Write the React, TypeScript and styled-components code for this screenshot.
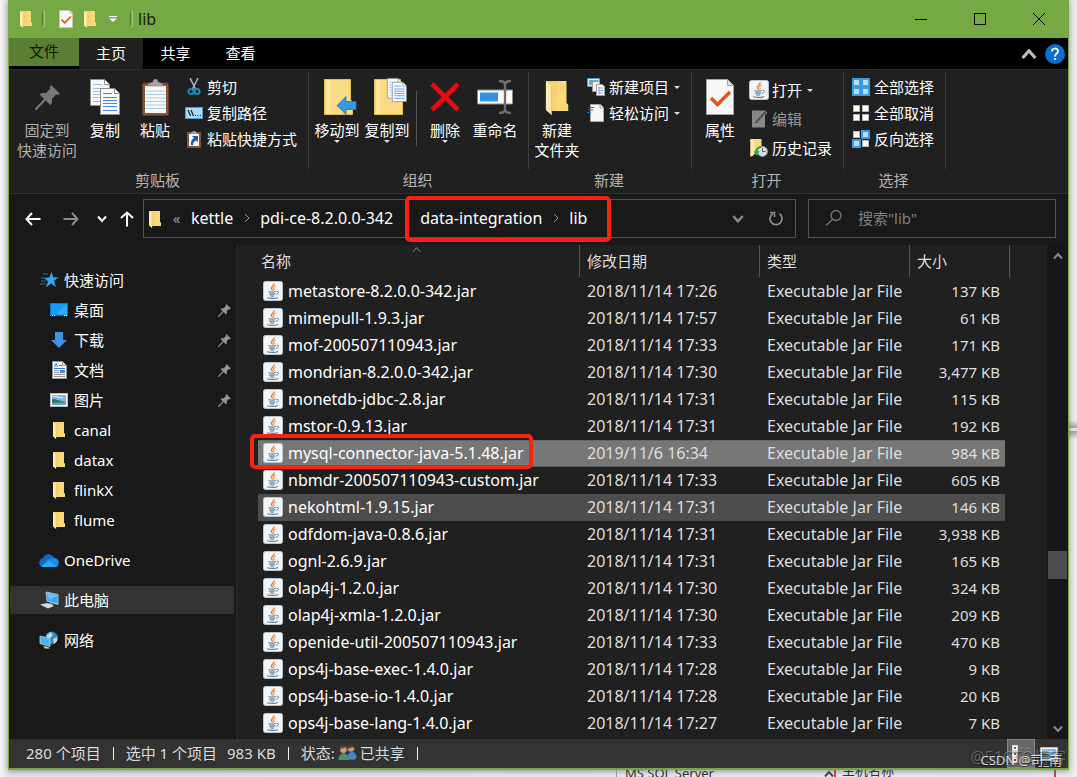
import React from "react";
import styled, { createGlobalStyle } from "styled-components";

const GlobalStyle = createGlobalStyle`
  * { box-sizing: border-box; }
  html, body { margin: 0; background: #efefef; }
  body {
    font-family: "Noto Sans", "Noto Sans CJK SC", sans-serif;
    font-size: 15px;
    line-height: 20px;
    color: #fff;
    overflow: hidden;
  }
  button, input { font: inherit; color: inherit; background: none; border: 0; margin: 0; padding: 0; }
  a { color: inherit; text-decoration: none; }
  svg { display: block; flex: none; }
  button { white-space: nowrap; }
`;

/* ---------- icons ---------- */

const Folder = ({ w = 14, h = 18 }: { w?: number; h?: number }) => (
  <svg width={w} height={h} viewBox="0 0 14 18" preserveAspectRatio="none">
    <path d="M1 1h11v11l1 1v3H3z" fill="#f6d274" />
    <path d="M8 1h4v11l1 1v3H6z" fill="#fbd977" />
    <path d="M1 1l3 2.500v14.500L1 15.500z" fill="#ffeab0" />
    <path d="M4 3.500V18" stroke="#e5bd5c" strokeWidth=".4" />
  </svg>
);

const Checked = ({ w, h }: { w: number; h: number }) => (
  <svg width={w} height={h} viewBox="0 0 28 36">
    <path d="M.5.5h21l6 6v29H.5z" fill="#f8f8f8" stroke="#a5a5a5" />
    <path d="M21.500.5v6h6" fill="#ddd" stroke="#a5a5a5" />
    <path d="M5 19l6.500 6.500L24 13" fill="none" stroke="#e8530e" strokeWidth="3.400" />
  </svg>
);

const Pin = ({ size, color }: { size: number; color: string }) => (
  <svg width={size} height={size} viewBox="0 0 24 24">
    <path d="M15.500 0L24 8.500l-2.200 1.200-1.500-.5-4.200 4.200c.7 2.300.4 4.200-1.200 6l-4.600-4.500L1.500 24 0 24l.2-1.700 8.500-8.900-4.300-4.300c1.800-1.500 3.800-1.800 6-1.100l4.200-4.300-.5-1.500z" fill={color} />
  </svg>
);

const Sheet = ({ x, y, line = "#4a86e8" }: { x: number; y: number; line?: string }) => (
  <g transform={`translate(${x} ${y})`}>
    <path d="M.5.5h14l5 5v21H.5z" fill="#f7f9fc" stroke="#8e8e8e" />
    <path d="M14.500.5v5h5" fill="#fff" stroke="#8e8e8e" />
    <path d="M3 5.500h9M3 9.500h14M3 12.500h14M3 15.500h14M3 18.500h14M3 22.500h14" stroke={line} />
  </g>
);

const CopyIcon = () => (
  <svg width="30" height="36" viewBox="0 0 30 36">
    <Sheet x={0} y={0} line="#9dbdf0" />
    <Sheet x={10} y={9} />
  </svg>
);

const PasteIcon = () => (
  <svg width="27" height="37" viewBox="0 0 27 37">
    <rect x=".5" y="4" width="26" height="32.500" rx="1.500" fill="#86583a" stroke="#5e3b22" />
    <path d="M3 7h21v27H3z" fill="#f6f9fb" />
    <path d="M3 12h21M3 15.500h21M3 19h21M3 22.500h21M3 26h21M3 29.500h21" stroke="#a9cfe4" />
    <path d="M6 7V5l5-2c0-4 5-4 5 0l5 2v2z" fill="#a4a4a4" stroke="#777" strokeWidth=".6" />
  </svg>
);

const ScissorsIcon = () => (
  <svg width="14" height="18" viewBox="0 0 14 18">
    <path d="M3 0l5.500 11M11 0L5.500 11" stroke="#a9b3bb" strokeWidth="1.500" />
    <circle cx="4" cy="13.500" r="2.600" fill="none" stroke="#168ed0" strokeWidth="1.900" />
    <circle cx="10" cy="13.500" r="2.600" fill="none" stroke="#168ed0" strokeWidth="1.900" />
  </svg>
);

const PathIcon = () => (
  <svg width="18" height="12" viewBox="0 0 18 12">
    <path d="M.5.5h17v11H.5z" fill="#a8dcf9" stroke="#4f9fd2" />
    <path d="M3 3l2.500 6M6 3l2.500 6" stroke="#222" strokeWidth="1.200" />
    <path d="M10 8.500h1M12.500 8.500h1M15 8.500h1" stroke="#222" />
  </svg>
);

const PasteLinkIcon = () => (
  <svg width="14" height="18" viewBox="0 0 14 18">
    <rect y="2" width="14" height="16" rx="1" fill="#80563a" />
    <path d="M2 4h10v12H2z" fill="#f4f7fa" />
    <path d="M3 4l3-3h2l3 3z" fill="#9a9a9a" />
    <path d="M5 6h6v6L9 10.500C7 11.500 6 13 6 15H4c-.5-3 .5-5.500 3-7z" fill="#215d9e" />
  </svg>
);

const BigFolder = ({ children }: { children?: React.ReactNode }) => (
  <svg width="40" height="40" viewBox="-6 1 40 40">
    <path d="M1.500 3.500h26v20l2 3v12h-28z" fill="#fbdc86" stroke="#e8bd53" />
    <path d="M4 4v34M6 4v34" stroke="#ffedb7" />
    {children}
  </svg>
);

const MoveToIcon = () => (
  <BigFolder>
    <path d="M14 29.500l9-9v5h10v8H23v5z" fill="#3a97e6" stroke="#2278c4" strokeWidth=".8" />
  </BigFolder>
);

const CopyToIcon = () => (
  <BigFolder>
    <g transform="translate(14 2) scale(.76)">
      <Sheet x={0} y={0} line="#9dbdf0" />
    </g>
    <g transform="translate(19 6) scale(.74)">
      <Sheet x={0} y={0} />
    </g>
  </BigFolder>
);

const DeleteIcon = () => (
  <svg width="30" height="30" viewBox="0 0 30 30">
    <path d="M2 2l26 26M28 2L2 28" stroke="#e60b12" strokeWidth="4.600" />
  </svg>
);

const RenameIcon = () => (
  <svg width="36" height="34" viewBox="0 0 36 34">
    <path d="M.5 10h35v14H.5z" fill="#fff" stroke="#8a8a8a" />
    <path d="M3 12.500h18v9H3z" fill="#3493e4" />
    <path d="M28 3v28M28 5c0-3-2-4-6-4M28 5c0-3 2-4 6-4M28 29c0 3-2 4-6 4M28 29c0 3 2 4 6 4" fill="none" stroke="#6f6f6f" strokeWidth="2.400" />
  </svg>
);

const NewItemIcon = () => (
  <svg width="18" height="18" viewBox="0 0 18 18">
    <path d="M.5.5h12v8H.5z" fill="#d9eef8" stroke="#4f9cc0" />
    <path d="M2 2h9v5H2z" fill="#70a8b8" />
    <path d="M5.500 3.500h7v10h-7z" fill="#eee" stroke="#999" />
    <path d="M9.500 6.500h6l2 2v9h-8z" fill="#fff" stroke="#999" />
    <path d="M11 10h5M11 12.500h5M11 15h5" stroke="#7d9fd0" />
    <path d="M12 8v9" stroke="#e08080" strokeWidth=".7" />
  </svg>
);

const EasyAccessIcon = () => (
  <svg width="18" height="18" viewBox="0 0 18 18">
    <path d="M3.500.5h10l3 3v14h-13z" fill="#f7f7f7" stroke="#aaa" />
    <path d="M13 .5v3.500h3.500" fill="none" stroke="#999" />
    <path d="M2 3.500h5M1 6h5M0 8.500h4" stroke="#1e6fb8" strokeWidth="1.200" />
  </svg>
);

const JavaIcon = () => (
  <svg width="20" height="20" viewBox="0 0 20 20">
    <rect x=".5" y=".5" width="19" height="19" rx="2" fill="#f2f4f5" stroke="#b6c6d2" />
    <path d="M11 2.500c1 2-3.500 3.300-2.600 5.100.3.700 1.100 1.100 1.200 1.900" fill="none" stroke="#e87b2c" strokeWidth="1.400" />
    <path d="M12.700 5.200c-2 .9-2.700 1.700-1.700 2.700.5.600.2 1.100-.5 1.700" fill="none" stroke="#e87b2c" />
    <path d="M5.500 10.500c2 .7 5.500.7 7.300 0M6 12.700c2 .6 4.500.6 6 0M7 14.700c1.500.5 3 .5 4.300 0M4 16.700c3 1 8.500 1 11-.2" fill="none" stroke="#5d7f9b" strokeWidth="1.200" />
    <path d="M13.500 10.300c2.600-.6 3 2.200-.6 3" fill="none" stroke="#5d7f9b" />
  </svg>
);

const EditIcon = () => (
  <svg width="18" height="18" viewBox="0 0 18 18">
    <path d="M2 .5h13v17H2z" fill="#888" />
    <path d="M4 15l1-4L14.500.8l2.500 2L7 13.500z" fill="#555" stroke="#aaa" strokeWidth=".6" />
  </svg>
);

const HistoryIcon = () => (
  <svg width="18" height="18" viewBox="0 0 18 18">
    <path d="M.5 0h11v15H3L.5 17z" fill="#f9d97f" />
    <path d="M.5 0L4 2v14l-3.500 2z" fill="#ffebb5" />
    <circle cx="12.500" cy="12.500" r="5" fill="#d7dcdf" stroke="#999" strokeWidth=".8" />
    <path d="M12.500 9.500v3h3" fill="none" stroke="#555" />
    <path d="M11.500 8c-4 0-6 3-5 6" fill="none" stroke="#35a839" strokeWidth="2.200" />
    <path d="M3.500 12.500l3.500 4.500 2.500-5z" fill="#35a839" />
  </svg>
);

const SelectGrid = ({ on }: { on: number[] }) => (
  <svg width="18" height="18" viewBox="0 0 18 18">
    {[0, 1, 2, 3].map((i) => {
      const x = (i % 2) * 9;
      const y = i > 1 ? 9 : 0;
      return on.includes(i) ? (
        <rect key={i} x={x + 1} y={y + 1} width="7" height="7" fill="#b9e0fc" stroke="#3b9ae8" strokeWidth="2" />
      ) : (
        <rect key={i} x={x + 1.5} y={y + 1.5} width="6" height="6" fill="#fff" stroke="#b5b5b5" />
      );
    })}
  </svg>
);

const Chevron = ({ dir, w = 10, color = "#999", weight = 2 }: { dir: "up" | "down" | "right"; w?: number; color?: string; weight?: number }) => (
  <svg width={w} height={w} viewBox="0 0 10 10">
    <path
      d={dir === "up" ? "M1 7.500l4-4.500 4 4.500" : dir === "down" ? "M1 2.500l4 4.500 4-4.500" : "M3 1l4 4-4 4"}
      fill="none" stroke={color} strokeWidth={weight}
    />
  </svg>
);

const Arrow = ({ turn = 0, color = "#fff" }: { turn?: number; color?: string }) => (
  <svg width="16" height="16" viewBox="0 0 16 16">
    <path d="M15.500 8H1.500M7 2L1.500 8 7 14" transform={`rotate(${turn} 8 8)`} fill="none" stroke={color} strokeWidth="2" />
  </svg>
);

const Triangle = () => (
  <svg width="6" height="3" viewBox="0 0 6 3"><path d="M0 0h6L3 3z" fill="#ddd" /></svg>
);

const StarIcon = () => (
  <svg width="19" height="16" viewBox="0 0 19 16">
    <path d="M11.500 0l1.600 5.300 5.400.3-4.500 3.200 2 6.200-4.800-3.500L6 15.500l2-6-3.700-3.500 5-.4z" fill="#35a7f2" />
    <path d="M3 2h5M1 6h4M1 9h5M0 12h6" stroke="#1c78bd" strokeWidth="1.200" />
  </svg>
);
const DesktopIcon = () => (
  <svg width="18" height="14" viewBox="0 0 18 14">
    <path d="M.5.5h17v12H.5z" fill="#159cf8" stroke="#0b78cd" />
    <path d="M17 1v10H7z" fill="#35acfb" />
    <path d="M1 12.500h16" stroke="#0a67b0" /><path d="M2 12.500h1M4 12.500h1M14 12.500h1M16 12.500h1" stroke="#fff" />
  </svg>
);
const DownloadIcon = () => (
  <svg width="16" height="16" viewBox="0 0 16 16"><path d="M4 0h8v8h4l-8 8-8-8h4z" fill="#3d94df" /></svg>
);
const DocumentIcon = () => (
  <svg width="15" height="18" viewBox="0 0 15 18">
    <path d="M.5.5h10l4 4v13H.5z" fill="#f8f8f8" stroke="#999" />
    <path d="M10.500.5v4h4" fill="none" stroke="#999" />
    <path d="M2.500 6L4 2.500 5.500 6M7 4.500h3M2 7.500h11M8 9.500h5" stroke="#2787ca" fill="none" />
    <path d="M2 9.500h5M2 11.500h5M2 13.500h11M2 15.500h11" stroke="#999" /><path d="M8 9h5v3H8z" fill="#4c8fb8" />
  </svg>
);
const PictureIcon = () => (
  <svg width="18" height="14" viewBox="0 0 18 14">
    <path d="M.5.5h17v13H.5z" fill="#fff" stroke="#bbb" />
    <path d="M2 2h14v10H2z" fill="#7db7ea" />
    <path d="M2 6c4 0 8 2 14 3v1H2z" fill="#3f6f5c" /><path d="M2 10l14-1v3H2z" fill="#5fa5c8" />
    <path d="M3 3.500h5M7 4.500h6" stroke="#d6ebfa" />
  </svg>
);
const CloudIcon = () => (
  <svg width="20" height="13" viewBox="0 0 20 13">
    <path d="M4 4c2-5 9-5 11 0 6 0 6 9 1 9H4C-1 13-1 5 4 4z" fill="#0f6cc4" />
    <path d="M15 4c6 0 6 9 1 9H9L7 6c3-1 6-2 8-2z" fill="#1490df" />
    <path d="M2 12l8-5 8 5-2 1H4z" fill="#2ba9ef" />
  </svg>
);
const ComputerIcon = () => (
  <svg width="20" height="18" viewBox="0 0 20 18">
    <path d="M7 1l12 2.500v10L8 10z" fill="#3aa8f4" stroke="#bfd5e2" strokeWidth=".8" />
    <path d="M8 1.500l10.500 3L10 9z" fill="#66c1fa" />
    <path d="M10 12l5 1-2 1.500-4-.8z" fill="#9aa5ac" />
    <path d="M1 13.500l7-1.500 7 3-6 2.500z" fill="#d7dcdf" />
  </svg>
);
const NetworkIcon = () => (
  <svg width="20" height="18" viewBox="0 0 20 18">
    <circle cx="12.500" cy="7" r="6.500" fill="#3d86b2" />
    <path d="M8 4l4-3 2 3-3 3-3 0zM14 8l4-2v4l-3 3z" fill="#b7dcea" />
    <path d="M1 5l10 2.500v8L1 12.500z" fill="#46b2fa" stroke="#b5ceda" strokeWidth=".8" />
    <path d="M4 15l5 1 2 1.500-5 0z" fill="#ccd4d8" />
  </svg>
);
const PeopleIcon = () => (
  <svg width="19" height="17" viewBox="0 0 19 17">
    <path d="M9 15c0-9 9.500-9 9.500-1L16 16z" fill="#4088c9" />
    <circle cx="13" cy="4.500" r="3.300" fill="#c99873" /><path d="M9.500 5c0-6 7-6 7 0l-2-2z" fill="#4d3a2c" />
    <path d="M.5 16c0-9 10-9 10.500 0z" fill="#46936b" />
    <circle cx="5.500" cy="5.500" r="3.400" fill="#d0a17c" /><path d="M2 5.500c0-5 7-5 7 0l-2-2z" fill="#5e4532" />
  </svg>
);
const SearchIcon = () => (
  <svg width="18" height="18" viewBox="0 0 18 18">
    <circle cx="11" cy="6.500" r="5" fill="none" stroke="#777" strokeWidth="1.300" />
    <path d="M7.500 10.500L1 16.500" stroke="#777" strokeWidth="1.300" />
  </svg>
);
const RefreshIcon = () => (
  <svg width="14" height="16" viewBox="0 0 14 16">
    <path d="M4 2.500a6 6 0 1 0 6.500.3" fill="none" stroke="#8a8a8a" strokeWidth="1.800" />
    <path d="M1 1.500h4.500V6" fill="none" stroke="#8a8a8a" strokeWidth="1.600" />
  </svg>
);
const HelpIcon = () => (
  <svg width="20" height="20" viewBox="0 0 20 20">
    <circle cx="10" cy="10" r="10" fill="#0c6fd0" />
    <path d="M7 7.500C7 3.500 13 3.500 13 7.300c0 2.400-3 2.400-3 5.200M10 14v2" fill="none" stroke="#fff" strokeWidth="1.700" />
  </svg>
);
const DetailsIcon = () => (
  <svg width="18" height="18" viewBox="0 0 18 18">
    <path d="M0 0h6v18H0z" fill="#ddd" />
    <path d="M1 1h4v4H1zM1 7h4v4H1zM1 13h4v4H1z" fill="#fff" />
    <path d="M2 2h2v2H2z" fill="#2e75b8" /><path d="M2 8h2v2H2z" fill="#5b7a2c" /><path d="M2 14h2v2H2z" fill="#c02020" />
    <path d="M7 3h4M13 3h5" stroke="#888" />
  </svg>
);

/* ---------- window frame ---------- */

const Desktop = styled.div`
  display: grid;
  grid-template-columns: 8px minmax(0, 1fr) 8px;
  background: linear-gradient(90deg, #f4f4f4, #e4e4e4 8px, #ececec);
`;

const Backdrop = styled.div`
  grid-column: 3;
  grid-row: 1;
  background: linear-gradient(#ebebeb 0 420px, #aaa 427px 428px, #e4e4e4 428px 431px, #aaa 431px 432px, #eee 440px);
`;

const Window = styled.main`
  grid-column: 2;
  grid-row: 1;
  border: 1px solid #76a843;
  border-top: 0;
  border-bottom-width: 2px;
  background: #191919;
  box-shadow: 0 1px 6px rgba(0, 0, 0, 0.4);
`;

const BelowWindow = styled.div`
  grid-column: 2;
  grid-row: 2;
  height: 7px;
  overflow: hidden;
  display: flex;
  align-items: center;
  padding-left: 600px;
  color: #333;
  font-size: 13px;
  line-height: 7px;
`;

const ShadedBox = styled.span`
  border-left: 1px solid #999;
  padding-left: 8px;
  margin-left: 8px;
  width: 208px;
  white-space: nowrap;
`;

const RedBox = styled.span`
  width: 222px;
  height: 7px;
  border: 0 solid #c64050;
  border-width: 0 2px;
  padding-left: 6px;
  line-height: 0;
`;

const TitleBar = styled.header`
  display: flex;
  align-items: center;
  height: 38px;
  padding-left: 10px;
  background: #76a843;
  color: #101c04;
`;

const QuickTools = styled.div`
  display: flex;
  align-items: center;
  width: 119px;
`;

const QuickButton = styled.button<{ $w: number }>`
  display: flex;
  justify-content: center;
  width: ${(p) => p.$w}px;
`;

const ToolDivider = styled.span<{ $gap: number }>`
  width: 3px;
  height: 16px;
  margin: 0 ${(p) => p.$gap}px;
  border: 1px solid #a4c57f;
  border-left-color: #557d2c;
  border-radius: 1px;
`;

const WindowTitle = styled.h1`
  flex: 1;
  margin: 0;
  font-size: 16px;
  font-weight: 400;
`;

const CaptionButton = styled.button`
  display: flex;
  align-items: center;
  justify-content: center;
  width: 59px;
  height: 38px;
`;

const TabBar = styled.nav`
  display: flex;
  height: 31px;
  background: #000;
`;

const Tab = styled.button<{ $kind?: "file" | "active" }>`
  width: ${(p) => (p.$kind === "file" ? 70 : p.$kind ? 64 : 65)}px;
  height: ${(p) => (p.$kind === "file" ? 28 : 31)}px;
  padding-bottom: 2px;
  background: ${(p) => (p.$kind === "file" ? "#5a7f32" : p.$kind ? "#202020" : "none")};
  color: ${(p) => (p.$kind === "file" ? "#0c1404" : "#fff")};
`;

const TabTools = styled.div`
  display: flex;
  align-items: center;
  gap: 8px;
  margin-left: auto;
  padding-right: 3px;
`;

/* ---------- ribbon ---------- */

const Ribbon = styled.section`
  display: flex;
  height: 125px;
  border-top: 1px solid #2d2d2d;
  border-bottom: 1px solid #303030;
  background: #202020;
`;

const Group = styled.section<{ $w: number }>`
  flex: none;
  width: ${(p) => p.$w}px;
  display: flex;
  flex-direction: column;
  background: linear-gradient(#404040, #404040) right 0 top 2px / 1px 97px no-repeat;
`;

const GroupBody = styled.div<{ $pad?: number }>`
  display: flex;
  height: 100px;
  padding-left: ${(p) => p.$pad ?? 3}px;
`;

const GroupTitle = styled.h2`
  margin: 0;
  padding-right: 3px;
  font-size: 15px;
  font-weight: 400;
  line-height: 20px;
  color: #b4b4b4;
  text-align: center;
`;

const BigButton = styled.button<{ $w?: number; $dim?: boolean }>`
  display: flex;
  flex-direction: column;
  align-items: center;
  width: ${(p) => p.$w ?? 50}px;
  padding-top: 4px;
  color: ${(p) => (p.$dim ? "#b0b0b0" : "#fff")};
`;

const BigIcon = styled.span`
  display: flex;
  align-items: center;
  justify-content: center;
  height: 46px;
`;

const SmallColumn = styled.div<{ $gap?: number }>`
  display: flex;
  flex-direction: column;
  align-items: flex-start;
  gap: ${(p) => p.$gap ?? 6}px;
  padding: ${(p) => (p.$gap ? 10 : 7)}px 0 0 4px;
`;

const SmallButton = styled.button<{ $dim?: boolean }>`
  display: flex;
  align-items: center;
  gap: 3px;
  height: 20px;
  color: ${(p) => (p.$dim ? "#999" : "#fff")};
`;

const SmallIcon = styled.span<{ $w?: number }>`
  display: flex;
  justify-content: center;
  width: ${(p) => p.$w ?? 20}px;
`;

const BodyDivider = styled.span`
  width: 1px;
  height: 55px;
  margin: 21px 3px 0 4px;
  background: #555;
`;

/* ---------- address ---------- */

const AddressRow = styled.div`
  display: flex;
  align-items: center;
  height: 51px;
  padding: 0 12px 2px 16px;
`;

const HistoryButtons = styled.div`
  display: flex;
  align-items: center;
  gap: 22px;
  width: 118px;
`;

const PairedButtons = styled.div`
  display: flex;
  align-items: center;
  gap: 12px;
  margin-left: -4px;
`;

const AddressBox = styled.div`
  flex: 1;
  display: flex;
  align-items: center;
  height: 39px;
  border: 1px solid #535353;
  padding-left: 4px;
`;

const Crumb = styled.a`
  padding-bottom: 2px;
  font-size: 16px;
  white-space: nowrap;
`;

const CrumbGap = styled.span<{ $w?: number }>`
  display: flex;
  justify-content: center;
  width: ${(p) => p.$w ?? 27}px;
  padding-bottom: 2px;
  color: #999;
`;

const AddressSpace = styled.span`
  flex: 1;
`;

const MarkedCrumbs = styled.span`
  position: relative;
  display: flex;
  align-items: center;
`;

const Mark = styled.span<{ $kind: "path" | "row" }>`
  position: absolute;
  inset: ${(p) => (p.$kind === "path" ? "-12px -24px -12px -15px" : "-6px 46px -2px -8px")};
  border: 4px solid #fb2113;
  border-radius: 5px;
  pointer-events: none;
  z-index: 1;
`;

const AddressButton = styled.button`
  display: flex;
  align-items: center;
  justify-content: center;
  width: 38px;
  height: 37px;
`;

const SearchBox = styled.label`
  display: flex;
  align-items: center;
  gap: 15px;
  width: 248px;
  height: 39px;
  margin-left: 12px;
  padding: 0 0 2px 16px;
  border: 1px solid #535353;
`;

const SearchInput = styled.input`
  width: 180px;
  outline: 0;
  &::placeholder { color: #808080; opacity: 1; }
`;

/* ---------- body ---------- */

const Body = styled.div`
  display: flex;
`;

const Sidebar = styled.nav`
  flex: none;
  width: 229px;
  padding-top: 21px;
  border-right: 2px solid #272727;
`;

const NavSection = styled.div`
  padding-bottom: 10px;
`;

const NavLink = styled.a<{ $child?: boolean; $active?: boolean }>`
  display: flex;
  align-items: center;
  gap: 4px;
  height: 28px;
  margin: 0 2px 2px 1px;
  padding-left: ${(p) => (p.$child ? 38 : 28)}px;
  padding-right: 3px;
  background: ${(p) => (p.$active ? "#333" : "none")};
`;

const NavIcon = styled.span`
  display: flex;
  justify-content: center;
  width: 22px;
`;

const NavLabel = styled.span`
  flex: 1;
`;

const ListPane = styled.section`
  flex: 1;
  min-width: 0;
  overflow: hidden;
  padding: 0 0 2px 20px;
  background: #202020;
`;

const FileTable = styled.table`
  width: 752px;
  table-layout: fixed;
  border-collapse: separate;
  border-spacing: 0;
`;

const HeadCell = styled.th<{ $first?: boolean }>`
  position: relative;
  height: 33px;
  padding: 0 0 2px ${(p) => (p.$first ? 3 : 8)}px;
  text-align: left;
  font-weight: 400;
  color: #dedede;
  background: ${(p) => (p.$first ? "none" : "linear-gradient(#555, #555) left top / 1px 32px no-repeat")};
  &:last-child { border-right: 1px solid #555; }
`;

const SortMark = styled.span`
  position: absolute;
  left: 154px;
  top: 0;
`;

const FileRow = styled.tr<{ $state?: "selected" | "hover" }>`
  height: 27px;
  & > td:not(:last-child) {
    background: ${(p) => (p.$state === "selected" ? "#777" : p.$state ? "#4d4d4d" : "none")};
    box-shadow: ${(p) => (p.$state === "selected" ? "inset 0 1px #666, inset 0 -1px #5c5c5c" : "none")};
  }
`;

const Cell = styled.td<{ $right?: boolean }>`
  padding: ${(p) => (p.$right ? "0 5px 2px 0" : "0 0 2px 8px")};
  text-align: ${(p) => (p.$right ? "right" : "left")};
  font-size: ${(p) => (p.$right ? 15 : 16)}px;
  color: #dedede;
  white-space: nowrap;
`;

const NameCell = styled.td`
  position: relative;
  padding: 0 0 2px 5px;
  font-size: 16px;
  color: #fff;
  white-space: nowrap;
`;

const FileName = styled.span`
  display: flex;
  align-items: center;
  gap: 5px;
`;

const ScrollBar = styled.div`
  display: flex;
  flex-direction: column;
  width: 21px;
  background: #171717;
`;

const ScrollButton = styled.button`
  display: flex;
  justify-content: center;
  align-items: center;
  height: 21px;
`;

const ScrollTrack = styled.div`
  flex: 1;
  padding: 285px 1px 0 1px;
`;

const ScrollThumb = styled.div`
  height: 28px;
  background: #4d4d4d;
`;

const StatusBar = styled.footer`
  position: relative;
  display: flex;
  align-items: center;
  height: 29px;
  padding-left: 17px;
  background: #333;
  color: #dcdcdc;
`;

const StatusItem = styled.span<{ $end?: boolean }>`
  display: flex;
  align-items: center;
  gap: 3px;
  padding-bottom: 2px;
  margin-right: ${(p) => (p.$end ? 12 : 10)}px;
  white-space: nowrap;
`;

const StatusDivider = styled.span`
  width: 1px;
  height: 13px;
  margin-right: 12px;
  background: #eee;
`;

const ViewButtons = styled.div`
  display: flex;
  margin-left: auto;
  margin-right: 5px;
`;

const ViewButton = styled.button<{ $on?: boolean }>`
  display: flex;
  align-items: center;
  justify-content: center;
  width: 28px;
  height: 29px;
  border: 1px solid ${(p) => (p.$on ? "#858585" : "transparent")};
  background: ${(p) => (p.$on ? "#666" : "none")};
`;

const Watermark = styled.span<{ $faint?: boolean }>`
  position: absolute;
  right: ${(p) => (p.$faint ? 2 : 6)}px;
  top: ${(p) => (p.$faint ? 8 : 11)}px;
  font-size: ${(p) => (p.$faint ? 16 : 13)}px;
  line-height: 20px;
  color: ${(p) => (p.$faint ? "rgba(190,190,190,.4)" : "rgba(255,255,255,.8)")};
  text-shadow: 0 1px 1px rgba(0, 0, 0, 0.5);
  white-space: nowrap;
  pointer-events: none;
`;

/* ---------- data ---------- */

const files: [string, string, string, ("selected" | "hover")?][] = [
  ["metastore-8.2.0.0-342.jar", "2018/11/14 17:26", "137 KB"],
  ["mimepull-1.9.3.jar", "2018/11/14 17:57", "61 KB"],
  ["mof-200507110943.jar", "2018/11/14 17:33", "171 KB"],
  ["mondrian-8.2.0.0-342.jar", "2018/11/14 17:30", "3,477 KB"],
  ["monetdb-jdbc-2.8.jar", "2018/11/14 17:31", "115 KB"],
  ["mstor-0.9.13.jar", "2018/11/14 17:31", "192 KB"],
  ["mysql-connector-java-5.1.48.jar", "2019/11/6 16:34", "984 KB", "selected"],
  ["nbmdr-200507110943-custom.jar", "2018/11/14 17:33", "605 KB"],
  ["nekohtml-1.9.15.jar", "2018/11/14 17:31", "146 KB", "hover"],
  ["odfdom-java-0.8.6.jar", "2018/11/14 17:31", "3,938 KB"],
  ["ognl-2.6.9.jar", "2018/11/14 17:31", "165 KB"],
  ["olap4j-1.2.0.jar", "2018/11/14 17:30", "324 KB"],
  ["olap4j-xmla-1.2.0.jar", "2018/11/14 17:30", "209 KB"],
  ["openide-util-200507110943.jar", "2018/11/14 17:33", "470 KB"],
  ["ops4j-base-exec-1.4.0.jar", "2018/11/14 17:28", "9 KB"],
  ["ops4j-base-io-1.4.0.jar", "2018/11/14 17:28", "20 KB"],
  ["ops4j-base-lang-1.4.0.jar", "2018/11/14 17:27", "7 KB"],
];

const places: [string, React.ReactNode, boolean][] = [
  ["桌面", <DesktopIcon />, true],
  ["下载", <DownloadIcon />, true],
  ["文档", <DocumentIcon />, true],
  ["图片", <PictureIcon />, true],
  ["canal", <Folder />, false],
  ["datax", <Folder />, false],
  ["flinkX", <Folder />, false],
  ["flume", <Folder />, false],
];

const Big = ({ icon, lines, menu, w, dim }: { icon: React.ReactNode; lines: string[]; menu?: boolean; w?: number; dim?: boolean }) => (
  <BigButton $w={w} $dim={dim}>
    <BigIcon>{icon}</BigIcon>
    {lines.map((l) => <span key={l}>{l}</span>)}
    {menu && <Triangle />}
  </BigButton>
);

const Small = ({ icon, label, menu, dim }: { icon: React.ReactNode; label: string; menu?: boolean; dim?: boolean }) => (
  <SmallButton $dim={dim}>
    <SmallIcon>{icon}</SmallIcon>
    <span>{label}</span>
    {menu && <SmallIcon $w={10}><Triangle /></SmallIcon>}
  </SmallButton>
);

export default function App() {
  return (
    <>
      <GlobalStyle />
      <Desktop>
        <Backdrop />
        <Window>
          <TitleBar>
            <QuickTools>
              <Folder />
              <ToolDivider $gap={9} />
              <QuickButton $w={26} aria-label="属性"><Checked w={14} h={18} /></QuickButton>
              <QuickButton $w={24} aria-label="新建文件夹"><Folder /></QuickButton>
              <QuickButton $w={24} aria-label="自定义">
                <svg width="8" height="6" viewBox="0 0 8 6"><path d="M0 .5h8" stroke="#fff" /><path d="M0 2.500h8l-4 3.500z" fill="#fff" /></svg>
              </QuickButton>
              <ToolDivider $gap={5} />
            </QuickTools>
            <WindowTitle>lib</WindowTitle>
            <CaptionButton aria-label="最小化">
              <svg width="12" height="12"><path d="M0 6.500h12" stroke="#000" /></svg>
            </CaptionButton>
            <CaptionButton aria-label="最大化">
              <svg width="12" height="12"><path d="M.5.5h11v11H.5z" fill="none" stroke="#000" /></svg>
            </CaptionButton>
            <CaptionButton aria-label="关闭">
              <svg width="12" height="12"><path d="M0 0l12 12M12 0L0 12" stroke="#000" /></svg>
            </CaptionButton>
          </TitleBar>

          <TabBar>
            <Tab $kind="file">文件</Tab>
            <Tab $kind="active">主页</Tab>
            <Tab>共享</Tab>
            <Tab>查看</Tab>
            <TabTools>
              <Chevron dir="up" w={16} color="#bbb" />
              <HelpIcon />
            </TabTools>
          </TabBar>

          <Ribbon>
            <Group $w={300}>
              <GroupBody $pad={5}>
                <Big w={66} dim icon={<Pin size={25} color="#777" />} lines={["固定到", "快速访问"]} />
                <Big icon={<CopyIcon />} lines={["复制"]} />
                <Big icon={<PasteIcon />} lines={["粘贴"]} />
                <SmallColumn>
                  <Small icon={<ScissorsIcon />} label="剪切" />
                  <Small icon={<PathIcon />} label="复制路径" />
                  <Small icon={<PasteLinkIcon />} label="粘贴快捷方式" />
                </SmallColumn>
              </GroupBody>
              <GroupTitle>剪贴板</GroupTitle>
            </Group>
            <Group $w={220}>
              <GroupBody>
                <Big menu icon={<MoveToIcon />} lines={["移动到"]} />
                <Big menu icon={<CopyToIcon />} lines={["复制到"]} />
                <BodyDivider />
                <Big menu icon={<DeleteIcon />} lines={["删除"]} />
                <Big icon={<RenameIcon />} lines={["重命名"]} />
              </GroupBody>
              <GroupTitle>组织</GroupTitle>
            </Group>
            <Group $w={163}>
              <GroupBody>
                <Big icon={<Folder w={26} h={36} />} lines={["新建", "文件夹"]} />
                <SmallColumn>
                  <Small menu icon={<NewItemIcon />} label="新建项目" />
                  <Small menu icon={<EasyAccessIcon />} label="轻松访问" />
                </SmallColumn>
              </GroupBody>
              <GroupTitle>新建</GroupTitle>
            </Group>
            <Group $w={152}>
              <GroupBody>
                <Big menu icon={<Checked w={28} h={36} />} lines={["属性"]} />
                <SmallColumn $gap={9}>
                  <Small menu icon={<JavaIcon />} label="打开" />
                  <Small dim icon={<EditIcon />} label="编辑" />
                  <Small icon={<HistoryIcon />} label="历史记录" />
                </SmallColumn>
              </GroupBody>
              <GroupTitle>打开</GroupTitle>
            </Group>
            <Group $w={102}>
              <GroupBody>
                <SmallColumn>
                  <Small icon={<SelectGrid on={[0, 1, 2, 3]} />} label="全部选择" />
                  <Small icon={<SelectGrid on={[]} />} label="全部取消" />
                  <Small icon={<SelectGrid on={[1, 2]} />} label="反向选择" />
                </SmallColumn>
              </GroupBody>
              <GroupTitle>选择</GroupTitle>
            </Group>
          </Ribbon>

          <AddressRow>
            <HistoryButtons>
              <button aria-label="后退"><Arrow /></button>
              <button aria-label="前进"><Arrow turn={180} color="#8a8a8a" /></button>
              <PairedButtons>
                <button aria-label="最近"><Chevron dir="down" color="#fff" /></button>
                <button aria-label="上移"><Arrow turn={90} /></button>
              </PairedButtons>
            </HistoryButtons>
            <AddressBox>
              <Folder />
              <CrumbGap $w={29}>«</CrumbGap>
              <Crumb href="#">kettle</Crumb>
              <CrumbGap><Chevron dir="right" weight={1} /></CrumbGap>
              <Crumb href="#">pdi-ce-8.2.0.0-342</Crumb>
              <CrumbGap><Chevron dir="right" weight={1} /></CrumbGap>
              <MarkedCrumbs>
                <Crumb href="#">data-integration</Crumb>
                <CrumbGap><Chevron dir="right" weight={1} /></CrumbGap>
                <Crumb href="#">lib</Crumb>
                <Mark $kind="path" />
              </MarkedCrumbs>
              <AddressSpace />
              <AddressButton aria-label="展开"><Chevron dir="down" w={12} color="#888" /></AddressButton>
              <AddressButton aria-label="刷新"><RefreshIcon /></AddressButton>
            </AddressBox>
            <SearchBox>
              <SearchIcon />
              <SearchInput type="text" placeholder={'搜索"lib"'} aria-label="搜索" />
            </SearchBox>
          </AddressRow>

          <Body>
            <Sidebar>
              <NavSection>
                <NavLink href="#"><NavIcon><StarIcon /></NavIcon><NavLabel>快速访问</NavLabel></NavLink>
                {places.map(([label, icon, pinned]) => (
                  <NavLink key={label} href="#" $child>
                    <NavIcon>{icon}</NavIcon>
                    <NavLabel>{label}</NavLabel>
                    {pinned && <Pin size={13} color="#8b959c" />}
                  </NavLink>
                ))}
              </NavSection>
              <NavSection><NavLink href="#"><NavIcon><CloudIcon /></NavIcon><NavLabel>OneDrive</NavLabel></NavLink></NavSection>
              <NavSection><NavLink href="#" $active><NavIcon><ComputerIcon /></NavIcon><NavLabel>此电脑</NavLabel></NavLink></NavSection>
              <NavSection><NavLink href="#"><NavIcon><NetworkIcon /></NavIcon><NavLabel>网络</NavLabel></NavLink></NavSection>
            </Sidebar>
            <ListPane>
              <FileTable>
                <colgroup>
                  <col width="321" /><col width="180" /><col width="150" /><col width="96" /><col width="5" />
                </colgroup>
                <thead>
                  <tr>
                    <HeadCell $first>名称<SortMark><Chevron dir="up" w={9} weight={1} /></SortMark></HeadCell>
                    <HeadCell>修改日期</HeadCell>
                    <HeadCell>类型</HeadCell>
                    <HeadCell colSpan={2}>大小</HeadCell>
                  </tr>
                </thead>
                <tbody>
                  {files.map(([name, date, size, state]) => (
                    <FileRow key={name} $state={state}>
                      <NameCell>
                        <FileName><JavaIcon />{name}</FileName>
                        {state === "selected" && <Mark $kind="row" />}
                      </NameCell>
                      <Cell>{date}</Cell>
                      <Cell>Executable Jar File</Cell>
                      <Cell $right>{size}</Cell>
                      <td />
                    </FileRow>
                  ))}
                </tbody>
              </FileTable>
            </ListPane>
            <ScrollBar>
              <ScrollButton aria-label="向上滚动"><Chevron dir="up" color="#888" /></ScrollButton>
              <ScrollTrack><ScrollThumb /></ScrollTrack>
              <ScrollButton aria-label="向下滚动"><Chevron dir="down" color="#888" /></ScrollButton>
            </ScrollBar>
          </Body>

          <StatusBar>
            <StatusItem $end>280 个项目</StatusItem>
            <StatusDivider />
            <StatusItem>选中 1 个项目</StatusItem>
            <StatusItem $end>983 KB</StatusItem>
            <StatusDivider />
            <StatusItem $end>状态:<PeopleIcon />已共享</StatusItem>
            <StatusDivider />
            <ViewButtons>
              <ViewButton $on aria-label="详细信息"><DetailsIcon /></ViewButton>
              <ViewButton aria-label="大图标"><PictureIcon /></ViewButton>
            </ViewButtons>
            <Watermark $faint>@51CTO博客</Watermark>
            <Watermark>CSDN @司_南</Watermark>
          </StatusBar>
        </Window>
        <BelowWindow>
          <ShadedBox>MS SQL Server</ShadedBox>
          <Chevron dir="up" color="#444" />
          <RedBox>主机名称</RedBox>
        </BelowWindow>
      </Desktop>
    </>
  );
}
